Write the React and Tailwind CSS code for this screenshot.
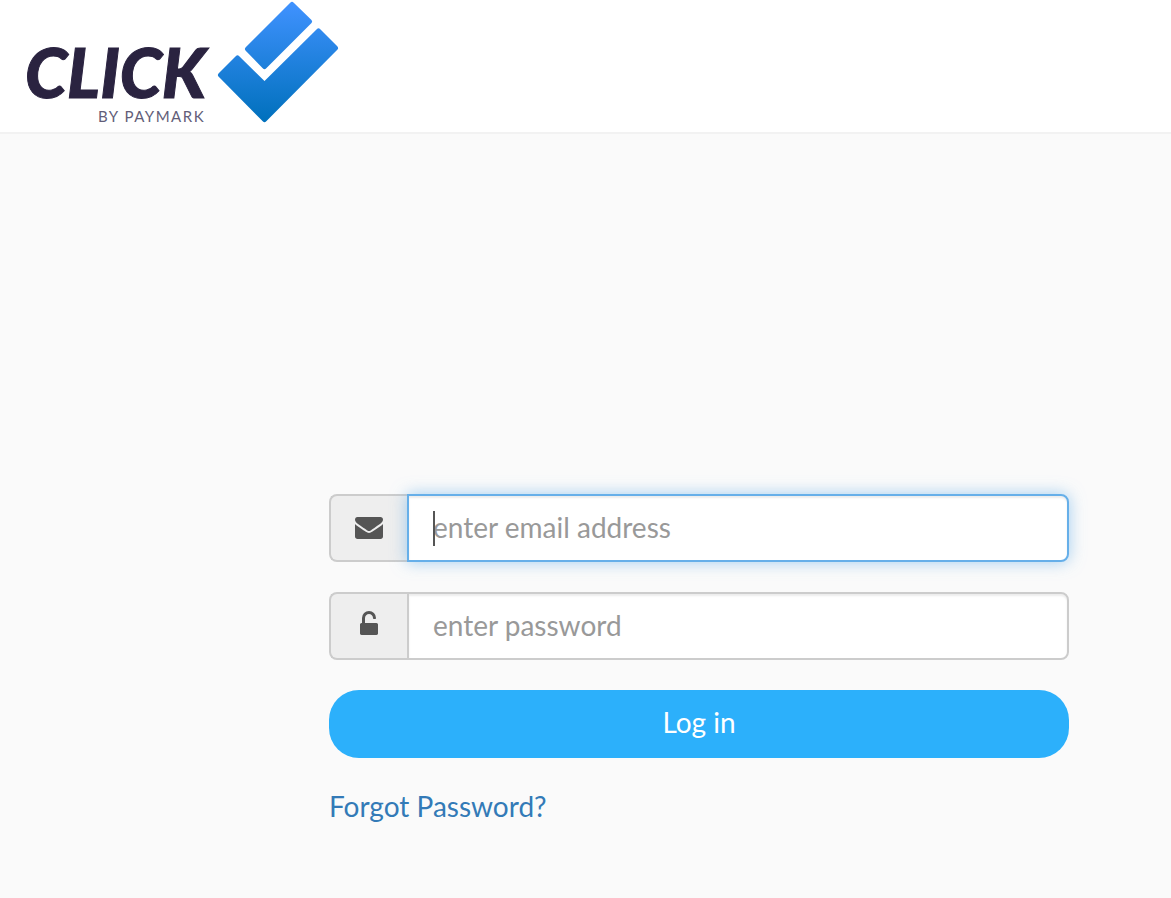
import React from "react";

function Logo() {
  return (
    <svg width="340" height="132" viewBox="0 0 340 132" role="img" aria-label="Click by Paymark" className="block">
      <defs>
        <linearGradient id="tick" gradientUnits="userSpaceOnUse" x1="0" y1="2" x2="0" y2="122">
          <stop offset="0" stopColor="#4092ff" />
          <stop offset="1" stopColor="#0070bc" />
        </linearGradient>
      </defs>
      <text x="25" y="98" className="fill-[#2a2340] stroke-[#2a2340] stroke-1 font-['Lato',sans-serif] text-[68px] font-black italic">CLICK</text>
      <text x="98" y="122" className="fill-[#625d78] font-['Lato',sans-serif] text-[15px] font-normal tracking-widest">BY PAYMARK</text>
      <g fill="url(#tick)" stroke="url(#tick)" strokeWidth="5" strokeLinejoin="round">
        <path d="M292 4.5 309.5 21.5 264.5 66.5 247.5 49Z" />
        <path d="M237.5 58 264.5 84.5 318.5 31 335.5 48 264.5 119.5 220.5 75Z" />
      </g>
    </svg>
  );
}

function EnvelopeIcon() {
  return (
    <svg viewBox="0 0 1792 1792" className="size-7" fill="currentColor" aria-hidden="true">
      <path d="M1792 710v794q0 66-47 113t-113 47h-1472q-66 0-113-47t-47-113v-794q44 49 101 87 362 246 497 345 57 42 92.5 65.5t94.5 48 110 24.5h2q51 0 110-24.5t94.5-48 92.5-65.5q170-123 498-345 57-39 100-87zm0-294q0 79-49 151t-122 123q-376 261-468 325-10 7-42.5 31t-54 38.5-52 32.5-57.5 27-50 9h-2q-23 0-50-9t-57.5-27-52-32.5-54-38.5-42.5-31q-91-64-262-182.5t-205-142.5q-62-42-117-115.5t-55-136.5q0-78 41.5-130t118.5-52h1472q65 0 112.5 47t47.5 113z" />
    </svg>
  );
}

function UnlockIcon() {
  return (
    <svg viewBox="0 0 1792 1792" className="size-7" fill="currentColor" aria-hidden="true">
      <path d="M1376 768q40 0 68 28t28 68v576q0 40-28 68t-68 28h-960q-40 0-68-28t-28-68v-576q0-40 28-68t68-28h32v-320q0-185 131.5-316.5t316.5-131.5 316.5 131.5 131.5 316.5q0 26-19 45t-45 19h-64q-26 0-45-19t-19-45q0-106-75-181t-181-75-181 75-75 181v320h736z" />
    </svg>
  );
}

function Field({ id, icon, label, ...props }) {
  return (
    <div className="flex h-[68px]">
      <label
        htmlFor={id}
        aria-label={label}
        className="flex w-[78px] shrink-0 items-center justify-center rounded-l-lg border-2 border-r-0 border-[#ccc] bg-[#eee] pb-0.5 text-[#555]"
      >
        {icon}
      </label>
      <div className="relative flex min-w-0 flex-1">
        <input
          id={id}
          className="peer w-full min-w-0 rounded-r-lg border-2 border-[#ccc] bg-white px-6 pb-0.5 text-[28px] text-[#555] caret-transparent shadow-[inset_0_2px_2px_rgba(0,0,0,0.075)] outline-none placeholder:text-[#999] focus:border-[#66afe9] focus:shadow-[inset_0_2px_2px_rgba(0,0,0,0.075),0_0_16px_rgba(102,175,233,0.6)] not-placeholder-shown:caret-[#555]"
          {...props}
        />
        <span className="pointer-events-none absolute left-[26px] top-[17px] hidden h-[35px] w-0.5 bg-[#555] peer-focus:peer-placeholder-shown:block" />
      </div>
    </div>
  );
}

export default function App() {
  return (
    <div className="min-h-screen bg-[#fafafa] font-['Lato',sans-serif]">
      <header className="border-b-2 border-[#f2f2f2] bg-white">
        <Logo />
      </header>
      <main className="pl-[329px] pr-[102px] pt-[360px]">
        <form className="flex flex-col gap-[30px]" onSubmit={(e) => e.preventDefault()}>
          <Field id="email" type="email" label="Email address" placeholder="enter email address" icon={<EnvelopeIcon />} autoFocus />
          <Field id="password" type="password" label="Password" placeholder="enter password" icon={<UnlockIcon />} />
          <button type="submit" className="h-[68px] rounded-[30px] bg-[#2cb0fb] pb-1 text-[28px] text-white">
            Log in
          </button>
          <a href="#forgot" className="self-start text-[28px] leading-9 text-[#337ab7]">
            Forgot Password?
          </a>
        </form>
      </main>
    </div>
  );
}
